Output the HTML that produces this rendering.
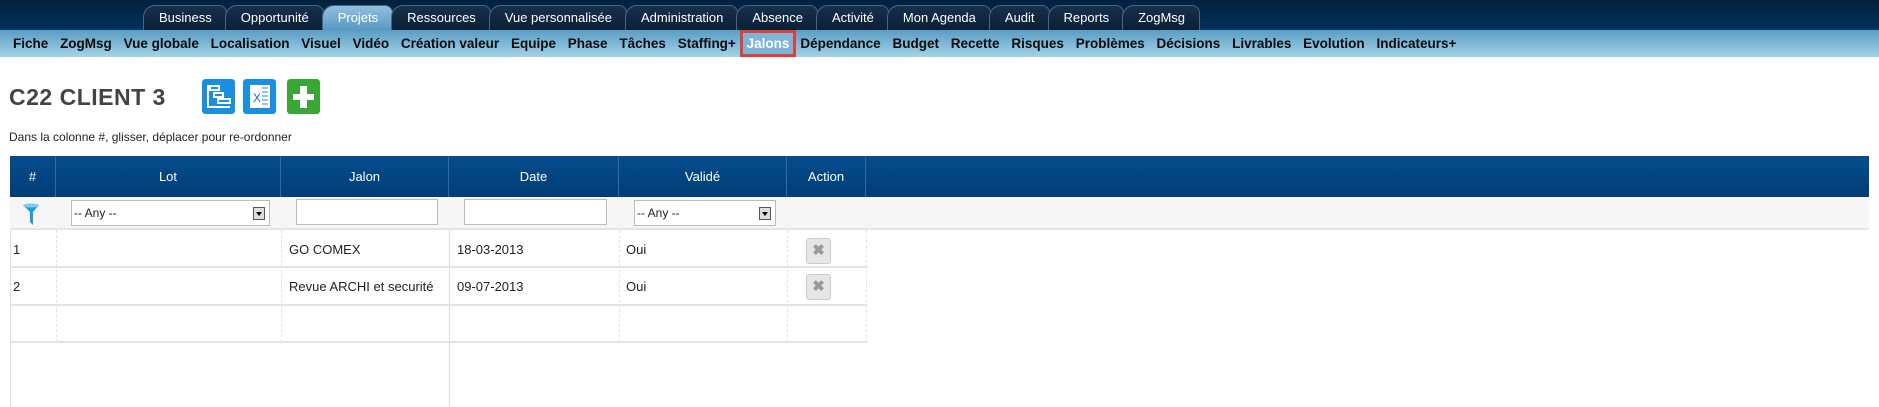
<!DOCTYPE html>
<html><head><meta charset="utf-8"><style>
*{box-sizing:border-box;margin:0;padding:0}
body{width:1879px;height:407px;overflow:hidden;background:#fff;font-family:"Liberation Sans",Arial,sans-serif;position:relative}
.top{position:absolute;left:0;top:0;width:1879px;height:30px;background:linear-gradient(#03203d,#022b50 60%,#01305a);border-bottom:1px solid #0b3d66}
.tabs{position:absolute;left:143px;top:5px;height:25px;display:flex}
.tab{height:25px;line-height:24px;color:#fff;font-size:13px;padding:0 14px 0 15px;margin-right:-2px;background:linear-gradient(#16314d,#0a1f36);border:1px solid #4a6580;border-bottom:none;border-radius:12px 8px 0 0}
.tab.act{background:linear-gradient(#8fbfdd,#5b98c2);color:#fff}
.sub{position:absolute;left:0;top:30px;width:1879px;height:27px;background:linear-gradient(#5a9dc4,#a4d2e8)}
.subi{position:absolute;left:13px;top:0;height:27px;display:flex;align-items:center;font-size:13.5px;font-weight:bold;color:#0a0a0a;white-space:nowrap}
.subi span{margin-right:11.8px}
.subi span.j{color:#fff;border:3px solid #e0403a;background:#7db5d6;padding:3px 4px;margin-left:-8px;margin-right:4px}
h1{position:absolute;left:9px;top:84px;font-size:23px;font-weight:bold;color:#444;letter-spacing:0.5px}
.ic{position:absolute;top:79px;width:33px;height:35px;border-radius:3px}
.note{position:absolute;left:9px;top:130px;font-size:12px;color:#222}
.hdr{position:absolute;left:10px;top:156px;width:1859px;height:41px;background:linear-gradient(#044c8e,#023d75)}
.h{position:absolute;top:156px;height:41px;line-height:41px;color:#fff;font-size:13px;text-align:center;border-right:1px solid #2f6aa3}
.frow{position:absolute;left:10px;top:197px;width:1859px;height:33px;background:#f6f6f6;border-bottom:2px solid #e4e4e4}
.vl{position:absolute;width:1px;border-left:1px dashed #e2e2e2}
.rl{position:absolute;left:10px;width:857px;height:2px;background:#e4e4e4}
.c{position:absolute;font-size:13px;color:#222}
.sel,.inp{position:absolute;top:200px;height:26px;border:1px solid #bbb;background:#fff;font-size:12px;line-height:24px;padding-left:2px;color:#222}
.dd{position:absolute;right:4px;top:6px;width:12px;height:13px;border:1px solid #555;background:#ddd}
.dd:after{content:"";position:absolute;left:2px;top:4px;border:3px solid transparent;border-top:4px solid #000}
.x{position:absolute;left:806px;width:25px;height:26px;border:1px solid #ccc;border-radius:3px;background:#e6e6e6;color:#999;font-weight:bold;font-size:15px;text-align:center;line-height:24px}
</style></head><body>
<div class="top"><div class="tabs">
<div class="tab">Business</div><div class="tab">Opportunité</div><div class="tab act">Projets</div><div class="tab">Ressources</div><div class="tab">Vue personnalisée</div><div class="tab">Administration</div><div class="tab">Absence</div><div class="tab">Activité</div><div class="tab">Mon Agenda</div><div class="tab">Audit</div><div class="tab">Reports</div><div class="tab">ZogMsg</div>
</div></div>
<div class="sub"><div class="subi">
<span>Fiche</span><span>ZogMsg</span><span>Vue globale</span><span>Localisation</span><span>Visuel</span><span>Vidéo</span><span>Création valeur</span><span>Equipe</span><span>Phase</span><span>Tâches</span><span>Staffing+</span><span class="j">Jalons</span><span>Dépendance</span><span>Budget</span><span>Recette</span><span>Risques</span><span>Problèmes</span><span>Décisions</span><span>Livrables</span><span>Evolution</span><span>Indicateurs+</span>
</div></div>
<h1>C22 CLIENT 3</h1>
<svg class="ic" style="left:202px" viewBox="0 0 33 35"><rect width="33" height="35" rx="3" fill="#1a8fe0"/><g fill="none" stroke="#fff" stroke-width="2"><path d="M6 6v22h22"/><rect x="8" y="7" width="9" height="4"/><rect x="12" y="14" width="9" height="4"/><rect x="16" y="20" width="12" height="4"/></g></svg>
<svg class="ic" style="left:243px" viewBox="0 0 33 35"><rect width="33" height="35" rx="3" fill="#1a8fe0"/><rect x="7" y="6" width="20" height="23" fill="#fff"/><text x="10" y="23" font-size="12" font-family="Liberation Sans" fill="#1a6fc0">X</text><path d="M19 9h6M19 13h6M19 17h6M19 21h6M19 25h6" stroke="#1a8fe0"/></svg>
<svg class="ic" style="left:287px" viewBox="0 0 33 35"><rect width="33" height="35" rx="3" fill="#3aa636"/><path d="M13 7h7v8h7v6h-7v8h-7v-8H6v-6h7z" fill="#fff"/></svg>
<div class="note">Dans la colonne #, glisser, déplacer pour re-ordonner</div>
<div class="hdr"></div>
<div class="h" style="left:10px;width:46px">#</div>
<div class="h" style="left:56px;width:225px">Lot</div>
<div class="h" style="left:281px;width:168px">Jalon</div>
<div class="h" style="left:449px;width:170px">Date</div>
<div class="h" style="left:619px;width:168px">Validé</div>
<div class="h" style="left:787px;width:79px">Action</div>
<div class="frow"></div>
<svg style="position:absolute;left:23px;top:203px" width="16" height="22" viewBox="0 0 16 22"><path d="M0 2h16L10 9v13l-3-3V9z" fill="#1e9be6"/><ellipse cx="8" cy="2.5" rx="8" ry="2" fill="#7fcaf5"/></svg>
<div class="sel" style="left:71px;width:199px">-- Any --<div class="dd"></div></div>
<div class="inp" style="left:296px;width:142px;top:199px"></div>
<div class="inp" style="left:464px;width:143px;top:199px"></div>
<div class="sel" style="left:634px;width:142px">-- Any --<div class="dd"></div></div>
<div class="vl" style="left:56px;top:230px;height:112px"></div>
<div class="vl" style="left:281px;top:230px;height:112px"></div>
<div class="vl" style="left:619px;top:230px;height:112px"></div>
<div class="vl" style="left:787px;top:230px;height:112px"></div>
<div class="vl" style="left:866px;top:230px;height:112px"></div>
<div style="position:absolute;left:10px;top:230px;width:1px;height:177px;background:#ddd"></div>
<div style="position:absolute;left:449px;top:230px;width:1px;height:177px;background:#ddd"></div>
<div class="rl" style="top:266px"></div>
<div class="rl" style="top:304px"></div>
<div class="rl" style="top:341px"></div>
<div class="c" style="left:13px;top:242px">1</div>
<div class="c" style="left:289px;top:242px">GO COMEX</div>
<div class="c" style="left:457px;top:242px">18-03-2013</div>
<div class="c" style="left:626px;top:242px">Oui</div>
<div class="x" style="top:238px">✖</div>
<div class="c" style="left:13px;top:279px">2</div>
<div class="c" style="left:289px;top:279px">Revue ARCHI et securité</div>
<div class="c" style="left:457px;top:279px">09-07-2013</div>
<div class="c" style="left:626px;top:279px">Oui</div>
<div class="x" style="top:274px">✖</div>
</body></html>
